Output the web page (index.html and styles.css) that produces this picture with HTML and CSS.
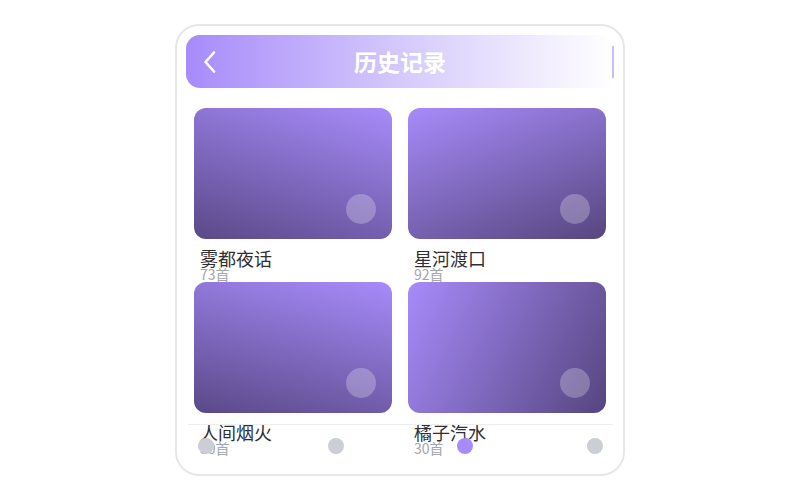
FILE: index.html
```html
<!DOCTYPE html>
<html lang="zh-CN">
<head>
    <meta charset="UTF-8">
    <meta name="viewport" content="width=device-width, initial-scale=1.0">
    <title>历史记录</title>
    <link rel="stylesheet" href="styles.css">
</head>
<body>
    <div class="phone">
        <header class="topbar">
            <button class="back" type="button" aria-label="返回">
                <svg width="14" height="22" viewBox="0 0 14 22">
                    <path d="M11 1.5 L2.5 11 L11 20.5" fill="none" stroke="#fff" stroke-width="2.6" stroke-linecap="round" stroke-linejoin="round"/>
                </svg>
            </button>
            <h1 class="topbar-title">历史记录</h1>
            <span class="topbar-edge"></span>
        </header>

        <div class="albums">
            <div class="album">
                <div class="cover cover-a"><span class="play"></span></div>
                <p class="album-name">雾都夜话</p>
                <p class="album-count">73首</p>
            </div>
            <div class="album">
                <div class="cover cover-b"><span class="play"></span></div>
                <p class="album-name">星河渡口</p>
                <p class="album-count">92首</p>
            </div>
            <div class="album">
                <div class="cover cover-c"><span class="play"></span></div>
                <p class="album-name">人间烟火</p>
                <p class="album-count">30首</p>
            </div>
            <div class="album">
                <div class="cover cover-d"><span class="play"></span></div>
                <p class="album-name">橘子汽水</p>
                <p class="album-count">30首</p>
            </div>
        </div>

        <nav class="tabbar">
            <span class="dot"></span>
            <span class="dot"></span>
            <span class="dot active"></span>
            <span class="dot"></span>
        </nav>
    </div>
</body>
</html>
```

FILE: styles.css
```css
* {
    box-sizing: border-box;
}
body {
    margin: 0;
    height: 100vh;
    display: flex;
    align-items: center;
    justify-content: center;
    background: #fff;
    font-family: "Noto Sans CJK SC", "Noto Sans", sans-serif;
    color: #2f2f33;
}
.phone {
    position: relative;
    width: 450px;
    height: 452px;
    padding: 9px;
    border: 2px solid #e6e7eb;
    border-radius: 24px;
    background: #fff;
    overflow: hidden;
}
.topbar {
    height: 53px;
    display: grid;
    grid-template-columns: 1fr auto 1fr;
    align-items: center;
    border-radius: 14px;
    background: linear-gradient(90deg, #a78bfa 0%, #d9cffc 55%, #ffffff 100%);
}
.back {
    justify-self: start;
    margin-left: 17px;
    padding: 0;
    border: none;
    background: none;
    display: flex;
}
.topbar-title {
    margin: 0;
    font-size: 23px;
    font-weight: bold;
    color: #fff;
    line-height: 1;
}
.topbar-edge {
    justify-self: end;
    width: 2px;
    height: 32px;
    background: #c9bcfb;
}
.albums {
    margin-top: 20px;
    padding: 0 8px;
    display: grid;
    grid-template-columns: 1fr 1fr;
    gap: 16px;
}
.album {
    height: 158px;
}
.cover {
    position: relative;
    height: 131px;
    border-radius: 12px;
}
.cover-a {
    background: linear-gradient(198deg, #a78bfa 0%, #5a4988 100%);
}
.cover-b {
    background: linear-gradient(158deg, #a78bfa 0%, #57467f 100%);
}
.cover-c {
    background: linear-gradient(195deg, #a78bfa 0%, #5a4988 100%);
}
.cover-d {
    background: linear-gradient(118deg, #a78bfa 0%, #56457f 100%);
}
.play {
    position: absolute;
    right: 16px;
    bottom: 15px;
    width: 30px;
    height: 30px;
    border-radius: 50%;
    background: rgba(255, 255, 255, 0.25);
}
.album-name {
    margin: 10px 0 0;
    padding-left: 6px;
    font-size: 18px;
    line-height: 18px;
    color: #2f2f33;
}
.album-count {
    margin: 0;
    padding-left: 6px;
    font-size: 14px;
    line-height: 14px;
    color: #a3a6ad;
}
.tabbar {
    position: absolute;
    left: 11px;
    right: 10px;
    top: 398px;
    padding: 13px 10px;
    display: flex;
    justify-content: space-between;
    border-top: 1px solid #eceef1;
}
.dot {
    width: 16px;
    height: 16px;
    border-radius: 50%;
    background: #cbced5;
}
.dot.active {
    background: #a78bfa;
}
```
